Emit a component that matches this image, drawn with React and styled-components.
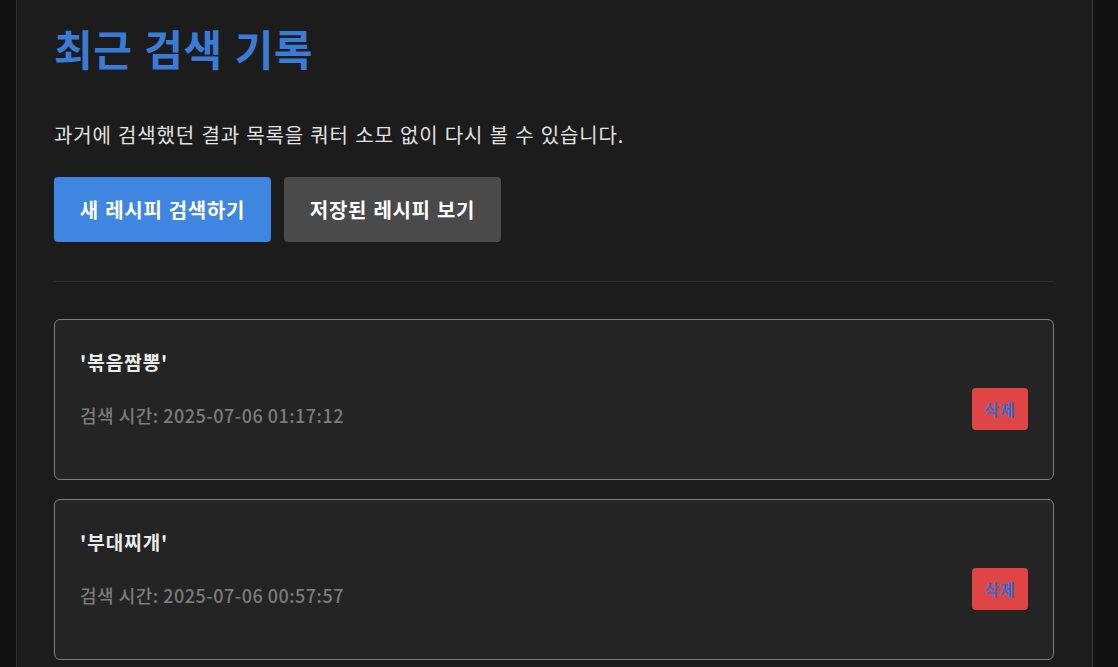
import styled, { createGlobalStyle } from "styled-components";

const GlobalStyle = createGlobalStyle`
  html, body {
    margin: 0;
    padding: 0;
    background: #121212;
    font-family: "Noto Sans CJK KR", "Noto Sans", sans-serif;
  }
`;

const Page = styled.div`
  height: 667px;
  overflow: hidden;
  background: #121212;
  display: flex;
`;

const Container = styled.main`
  margin-left: 16px;
  width: 1000px;
  padding: 0 38px 0 37px;
  background: #1c1c1c;
  border-left: 1px solid #2e2e2e;
  border-right: 1px solid #3a3a3a;
`;

const Title = styled.h1`
  margin: 20px 0 0;
  font-size: 42px;
  line-height: 56px;
  font-weight: 700;
  color: #3a7bd5;
  letter-spacing: 0.5px;
  word-spacing: 2px;
`;

const Lead = styled.p`
  margin: 46px 0 0;
  font-size: 20px;
  line-height: 26px;
  color: #e2e2e2;
  letter-spacing: 0.85px;
  word-spacing: 1px;
`;

const Actions = styled.div`
  display: flex;
  gap: 13px;
  margin-top: 29px;
`;

const ActionButton = styled.button`
  width: 217px;
  height: 65px;
  border: none;
  border-radius: 4px;
  font-family: inherit;
  font-size: 20px;
  font-weight: 700;
  color: #ffffff;
  letter-spacing: 0.7px;
  word-spacing: 1px;
  background: ${(p) => (p.$primary ? "#3f86e0" : "#4a4a4a")};
  cursor: pointer;
`;

const Divider = styled.hr`
  margin: 39px 0 37px;
  border: none;
  border-top: 1px solid #303030;
`;

const List = styled.div`
  display: flex;
  flex-direction: column;
  gap: 19px;
`;

const Card = styled.div`
  display: flex;
  justify-content: space-between;
  padding: 29px 25px 29px;
  background: #242424;
  border: 1px solid #7e7e7e;
  border-radius: 6px;
`;

const Info = styled.div`
  display: flex;
  flex-direction: column;
`;

const Query = styled.h3`
  margin: 0 0 27px;
  font-size: 19px;
  line-height: 26px;
  font-weight: 700;
  color: #ececec;
  letter-spacing: 1px;
`;

const Time = styled.p`
  margin: 0 0 22px;
  font-size: 18px;
  line-height: 26px;
  font-weight: 500;
  color: #7c7c7c;
  letter-spacing: 0.5px;
`;

const DeleteButton = styled.button`
  align-self: flex-end;
  margin-bottom: 20px;
  width: 56px;
  height: 42px;
  border: none;
  border-radius: 4px;
  background: #e04545;
  color: #2f6fd0;
  font-family: inherit;
  font-size: 16px;
  font-weight: 700;
  letter-spacing: 1px;
  cursor: pointer;
`;

const history = [
  { id: 1, query: "볶음짬뽕", time: "2025-07-06 01:17:12" },
  { id: 2, query: "부대찌개", time: "2025-07-06 00:57:57" },
];

export default function App() {
  return (
    <>
      <GlobalStyle />
      <Page>
        <Container>
          <Title>최근 검색 기록</Title>
          <Lead>과거에 검색했던 결과 목록을 쿼터 소모 없이 다시 볼 수 있습니다.</Lead>
          <Actions>
            <ActionButton $primary>새 레시피 검색하기</ActionButton>
            <ActionButton>저장된 레시피 보기</ActionButton>
          </Actions>
          <Divider />
          <List>
            {history.map((item) => (
              <Card key={item.id}>
                <Info>
                  <Query>'{item.query}'</Query>
                  <Time>검색 시간: {item.time}</Time>
                </Info>
                <DeleteButton>삭제</DeleteButton>
              </Card>
            ))}
          </List>
        </Container>
      </Page>
    </>
  );
}
